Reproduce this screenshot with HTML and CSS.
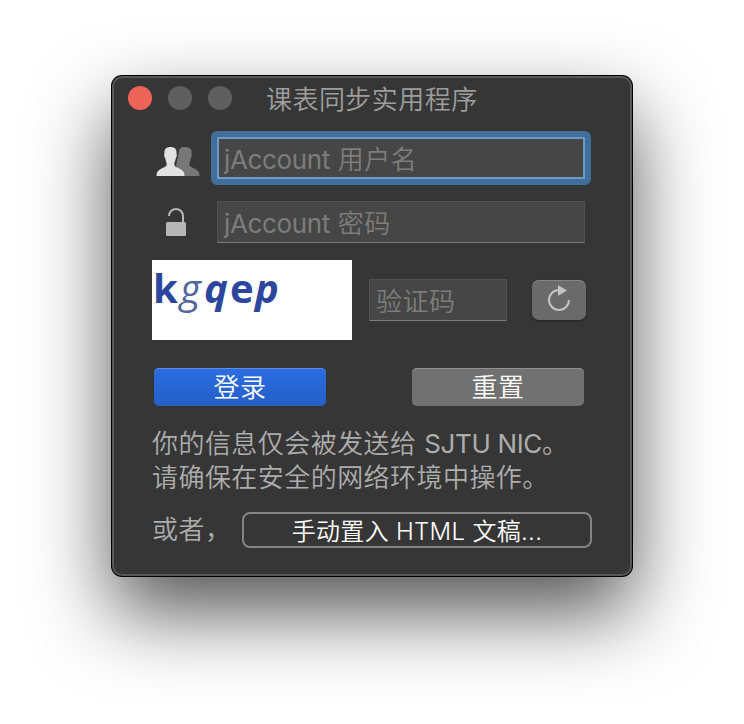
FILE: index.html
```html
<!DOCTYPE html>
<html lang="zh-CN">
<head>
<meta charset="utf-8">
<title>课表同步实用程序</title>
<link rel="stylesheet" href="styles.css">
</head>
<body>
<main class="window">
  <header class="titlebar">
    <div class="lights"><i class="light close"></i><i class="light"></i><i class="light"></i></div>
    <h1 class="title">课表同步实用程序</h1>
  </header>
  <form class="content">
    <div class="row user">
      <svg class="icon-users" width="44" height="32" viewBox="0 0 44 32">
        <path fill="#777" d="M23.500 3C25 1 28 .700 31 1.300C34.500 1.800 36 4 35.500 7.500C36.200 8.500 36 11 34.800 12C34.500 15 33.300 16 33.300 18.500C33.600 22 40.500 22 42.700 26Q43.600 28 43.500 30H28L20 20Z"/>
        <path fill="#e2e2e2" d="M14.500 1C18.500 1 21 3 20.500 7.500C21.200 8.500 20.900 11 19.800 12C19.500 15 18.300 16 18.300 18.500C18.600 22 25.500 22 27.700 26Q28.600 28 28.500 30H.500Q.400 28 1.300 26C3.500 22 10.400 22 10.700 18.500C10.700 16 9.500 15 9.200 12C8.100 11 7.800 8.500 8.500 7.500C8 3 10.500 1 14.500 1Z"/>
      </svg>
      <div class="field focused"><span><span class="latin">jAccount</span> 用户名</span></div>
    </div>
    <div class="row password">
      <svg class="icon-lock" width="20" height="30" viewBox="0 0 20 30">
        <path d="M3 8a7 7 0 0 1 14 0v7" fill="none" stroke="#b6b6b6" stroke-width="2"/>
        <rect y="14" width="20" height="14" rx="1.500" fill="#b6b6b6"/>
      </svg>
      <div class="field"><span><span class="latin">jAccount</span> 密码</span></div>
    </div>
    <div class="row verify">
      <div class="captcha"><b>k</b><i>g</i><b><i>q</i></b><b>e</b><b><i>p</i></b></div>
      <div class="field code"><span>验证码</span></div>
      <button class="refresh" type="button" aria-label="刷新">
        <svg width="26" height="30" viewBox="0 0 26 30">
          <path d="M23 15a10 10 0 1 1-10-10" fill="none" stroke="#c4c4c4" stroke-width="2"/>
          <path d="M12 0v11l9-5.500z" fill="#c4c4c4"/>
        </svg>
      </button>
    </div>
    <div class="row actions">
      <button class="push primary" type="button">登录</button>
      <button class="push" type="button">重置</button>
    </div>
    <p class="note">你的信息仅会被发送给 <span class="latin">SJTU NIC</span>。<br>请确保在安全的网络环境中操作。</p>
    <div class="row manual">
      <span>或者，</span>
      <button class="outline" type="button">手动置入 HTML 文稿...</button>
    </div>
  </form>
</main>
</body>
</html>
```

FILE: styles.css
```css
* { box-sizing: border-box; }
body {
  margin: 0;
  height: 724px;
  padding: 76px 112px;
  overflow: hidden;
  background: #fff;
  font: 350 26px/34px Inter, "Noto Sans CJK SC", sans-serif;
  letter-spacing: .45px;
  color: #adadad;
}
.window {
  width: 520px;
  height: 500px;
  border: 2px solid #585858;
  border-radius: 10px;
  background: #363636;
  box-shadow: 0 0 0 1px #000, 0 36px 80px rgba(0, 0, 0, .68);
}
.titlebar { display: flex; align-items: center; height: 40px; padding-left: 14px; }
.lights { display: flex; gap: 16px; }
.light { width: 24px; height: 24px; border-radius: 50%; background: #5e5e5e; }
.light.close { background: #ee6459; }
.title { margin: 4px 0 0 34px; font-size: 26px; font-weight: 350; color: #9e9e9e; }
.content { padding: 19px 38px 0; }
.row { display: flex; align-items: center; }
.icon-users { margin: 8px 17px 0 4px; }
.icon-lock { margin: 2px 31px 0 14px; }
.latin { font-weight: 400; letter-spacing: -.35px; }
.field {
  display: flex;
  align-items: center;
  width: 368px;
  height: 42px;
  padding: 3px 0 0 6px;
  border: 1px solid #525252;
  border-bottom: 1px solid #7d7d7d;
  background: #464646;
  color: #7d7d7d;
  white-space: nowrap;
}
.field.focused {
  position: relative;
  border: 2px solid #6d9ac8;
  padding: 3px 0 0 5px;
}
.field.focused::before {
  content: "";
  position: absolute;
  inset: -8px;
  border: 6px solid #3f6f9a;
  border-radius: 6px;
}
.password { margin-top: 22px; }
.verify { margin-top: 17px; }
.captcha {
  display: grid;
  grid-template-columns: 25px 26px 26px 25px 26px;
  width: 200px;
  height: 80px;
  padding-left: 1px;
  background: #fff;
  color: #2c469e;
  font: 40px/56px "Open Sans", sans-serif;
  letter-spacing: 0;
}
.captcha > i { padding-left: 2px; color: #53659f; }
.code { width: 138px; margin-left: 17px; }
.refresh {
  display: flex;
  justify-content: center;
  width: 54px;
  height: 40px;
  margin-left: 25px;
  padding: 5px 0 0;
  border: 0;
  border-radius: 7px;
  background: #6a6a6a;
  box-shadow: inset 0 1px #858585, 0 1px 2px #222;
}
.actions { justify-content: space-between; margin-top: 28px; padding: 0 8px 0 2px; }
.push {
  width: 172px;
  height: 38px;
  padding: 2px 0 0;
  border: 0;
  border-radius: 5px;
  background: #717171;
  box-shadow: inset 0 1px #929292;
  color: #fff;
  font: inherit;
  letter-spacing: inherit;
}
.primary { background: linear-gradient(#2b6de0, #255fc8); box-shadow: inset 0 1px #5a8eea; }
.note { margin: 21px 0 0; white-space: nowrap; }
.manual { margin-top: 17px; justify-content: space-between; }
.outline {
  width: 350px;
  height: 36px;
  padding: 1px 0 0;
  border: 2px solid #858585;
  border-radius: 8px;
  background: transparent;
  color: #fff;
  font: inherit;
  font-size: 24px;
  letter-spacing: .3px;
}
```
